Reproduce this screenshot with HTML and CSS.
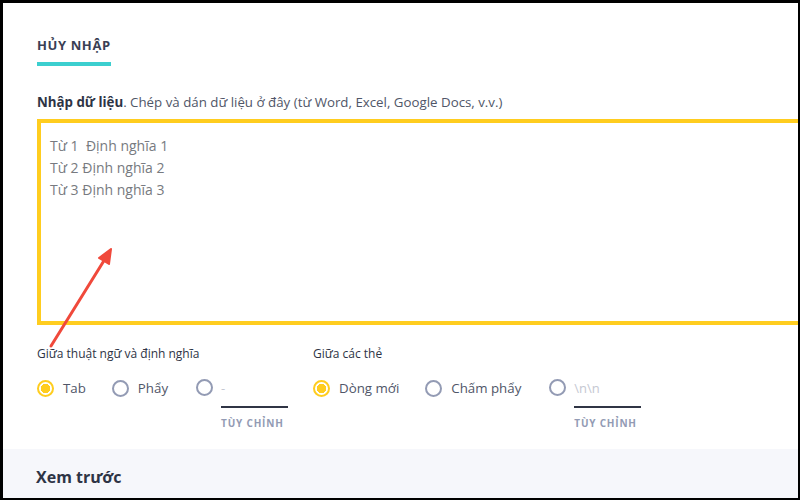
FILE: index.html
```html
<!DOCTYPE html>
<html lang="vi">
  <head>
    <meta charset="utf-8">
    <meta name="viewport" content="width=device-width, initial-scale=1">
    <title>Nhập dữ liệu</title>
    <link rel="stylesheet" href="styles.css">
  </head>
  <body>
    <div class="page">
      <div class="import">
        <div class="import__tabs">
          <span class="import__tab">HỦY NHẬP</span>
        </div>
        <p class="import__label">
          <b>Nhập dữ liệu</b>. Chép và dán dữ liệu ở đây (từ Word, Excel, Google Docs, v.v.)
        </p>
        <div class="import__area">
          <textarea class="import__input" placeholder="Từ 1  Định nghĩa 1&#10;Từ 2 Định nghĩa 2&#10;Từ 3 Định nghĩa 3"></textarea>
        </div>
        <div class="options">
          <div class="options__group">
            <div class="options__title">Giữa thuật ngữ và định nghĩa</div>
            <div class="options__row">
              <label class="radio radio--checked"><span class="radio__dot"></span>Tab</label>
              <label class="radio"><span class="radio__dot"></span>Phẩy</label>
              <label class="radio radio--custom">
                <span class="radio__dot"></span>
                <span class="custom">
                  <span class="custom__value">-</span>
                  <span class="custom__caption">TÙY CHỈNH</span>
                </span>
              </label>
            </div>
          </div>
          <div class="options__group">
            <div class="options__title">Giữa các thẻ</div>
            <div class="options__row">
              <label class="radio radio--checked"><span class="radio__dot"></span>Dòng mới</label>
              <label class="radio"><span class="radio__dot"></span>Chấm phẩy</label>
              <label class="radio radio--custom">
                <span class="radio__dot"></span>
                <span class="custom">
                  <span class="custom__value">\n\n</span>
                  <span class="custom__caption">TÙY CHỈNH</span>
                </span>
              </label>
            </div>
          </div>
        </div>
      </div>
      <div class="preview">
        <h2 class="preview__header">Xem trước</h2>
      </div>
      <!-- стрелка-пометка поверх скриншота -->
      <svg class="arrow" width="800" height="500" viewBox="0 0 800 500">
        <line x1="51" y1="346" x2="105" y2="259" stroke="#f0493b" stroke-width="3" stroke-linecap="round"/>
        <polygon points="111,249 99,258 109,264" fill="#f0493b" stroke="#f0493b" stroke-width="2" stroke-linejoin="round"/>
      </svg>
    </div>
  </body>
</html>
```

FILE: styles.css
```css
html {
  background: #000;
  margin: 0;
  padding: 0;
}

body {
  margin: 0;
  padding: 3px 2px 2px 3px;
  height: 500px;
  box-sizing: border-box;
  font-family: "Open Sans", "Noto Sans", sans-serif;
  color: #2e3856;
}

.page {
  position: relative;
  height: 100%;
  background: #fff;
  overflow: hidden;
  display: flex;
  flex-direction: column;
}

.import {
  padding: 34px 0 0 34px;
  flex: 1;
}

.import__tabs {
  display: flex;
}

.import__tab {
  display: inline-block;
  font-size: 13px;
  font-weight: 700;
  letter-spacing: 0.6px;
  color: #3a3f55;
  padding-bottom: 9px;
  border-bottom: 4px solid #3ccfcf;
  line-height: 16px;
}

.import__label {
  margin: 27px 0 8px;
  font-size: 13.3px;
  line-height: 18px;
  color: #505668;
}

.import__label b {
  color: #2e3445;
}

.import__area {
  margin-right: -40px;
}

.import__input {
  display: block;
  width: 100%;
  height: 206px;
  box-sizing: border-box;
  border: 4px solid #ffcd1f;
  padding: 12px 9px;
  font-family: inherit;
  font-size: 14px;
  line-height: 22px;
  resize: none;
  outline: none;
}

.import__input::placeholder {
  color: #777a80;
}

.options {
  display: flex;
  margin-top: 20px;
}

.options__group {
  width: 276px;
  flex-shrink: 0;
}

.options__title {
  font-size: 12px;
  line-height: 18px;
  color: #2e3445;
}

.options__row {
  display: flex;
  align-items: flex-start;
  margin-top: 16px;
  white-space: nowrap;
}

.radio {
  display: flex;
  align-items: center;
  font-size: 13.3px;
  color: #505668;
  margin-right: 26px;
  height: 18px;
}

.radio:nth-child(2) {
  margin-right: 28px;
}

.radio__dot {
  width: 17px;
  height: 17px;
  box-sizing: border-box;
  border: 2px solid #939bb4;
  border-radius: 50%;
  margin-right: 9px;
  flex-shrink: 0;
}

.radio--checked .radio__dot {
  border-color: #ffcd1f;
  background: radial-gradient(circle, #ffcd1f 0, #ffcd1f 4.5px, #fff 5px);
}

.radio--custom {
  align-items: flex-start;
  height: auto;
  margin-right: 0;
}

.custom {
  display: flex;
  flex-direction: column;
  margin-left: -1px;
}

.custom__value {
  width: 67px;
  height: 18px;
  line-height: 18px;
  color: #c5c8d2;
  font-size: 13px;
  border-bottom: 2px solid #303545;
  padding-bottom: 9px;
}

.custom__caption {
  margin-top: 8px;
  font-size: 10px;
  line-height: 14px;
  font-weight: 700;
  letter-spacing: 0.8px;
  color: #939bb4;
}

.preview {
  background: #f6f7fb;
  height: 49px;
  padding: 0 0 0 33px;
}

.preview__header {
  margin: 0;
  font-size: 16px;
  font-weight: 700;
  line-height: 20px;
  padding-top: 18px;
  color: #2e3445;
}

.arrow {
  position: absolute;
  top: -3px;
  left: -3px;
  pointer-events: none;
}
```
